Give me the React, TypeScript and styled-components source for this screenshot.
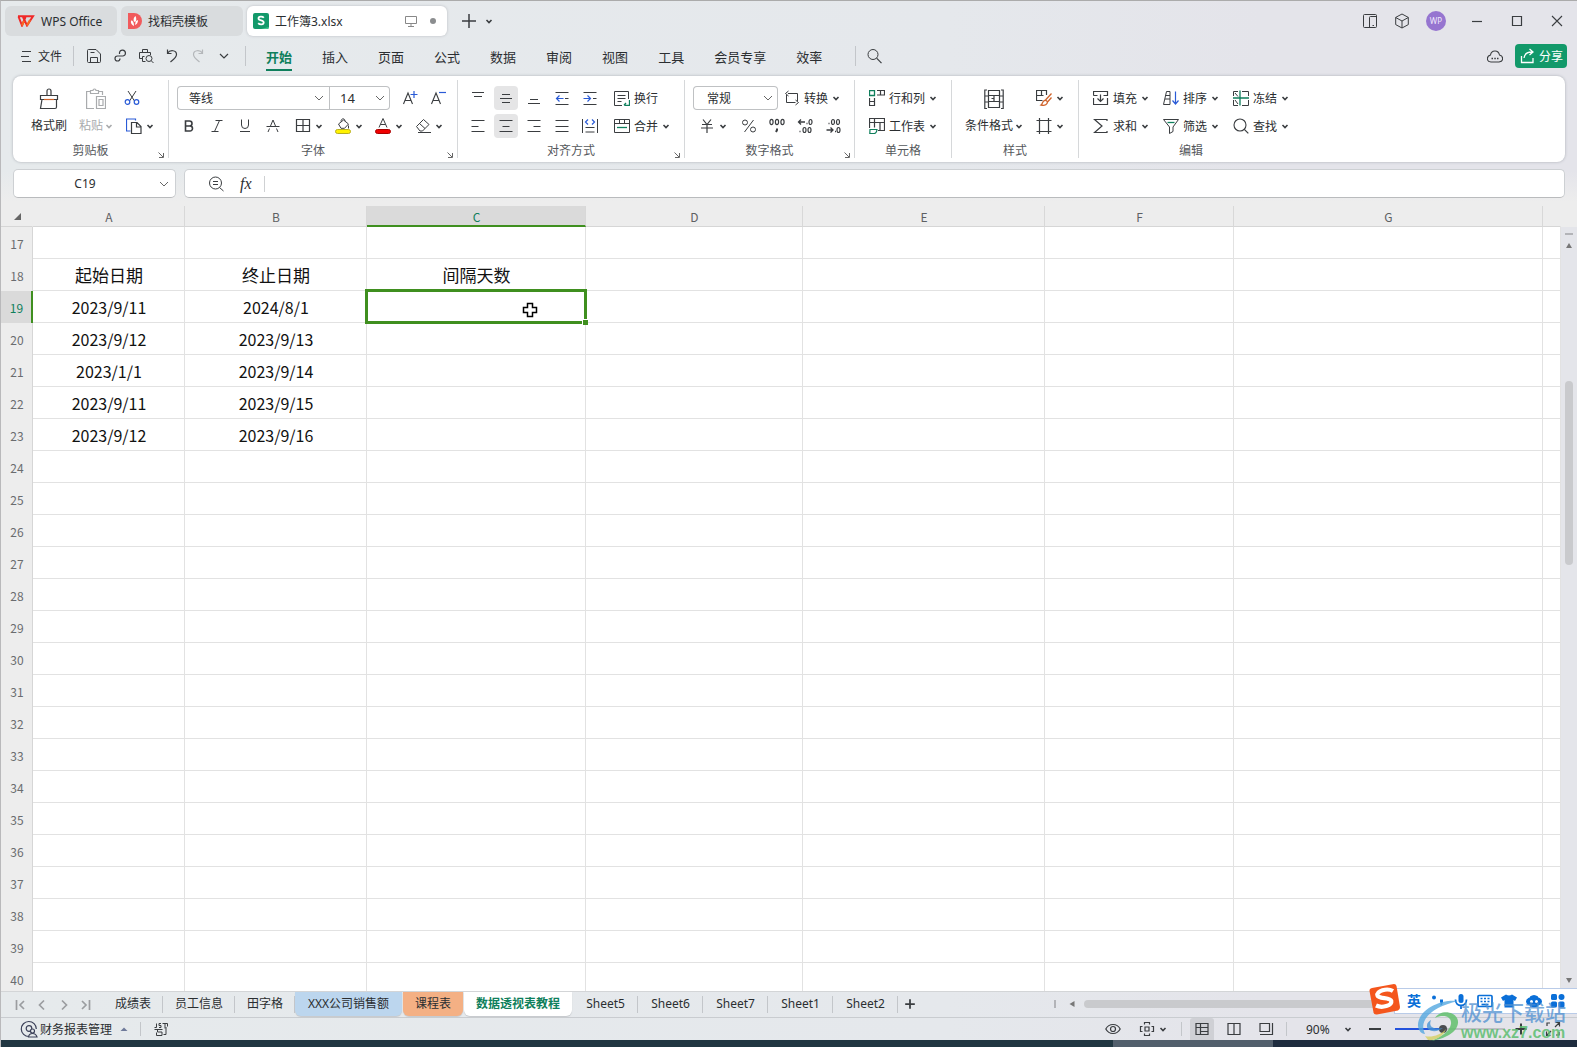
import React, { useState } from 'react';
import styled, { createGlobalStyle, css } from 'styled-components';

const ui = '"Noto Sans", "Noto Sans CJK SC", sans-serif';
const sheetFont = '"Noto Sans CJK SC", "Noto Sans", sans-serif';
const ink = '#2b2e31';
const green = '#0f7f5c';
const gridGreen = '#3f8f1f';
const blue = '#2a5bd7';

const Global = createGlobalStyle`
  *, *::before, *::after { box-sizing: border-box; }
  body { margin: 0; font-family: ${ui}; font-size: 12px; color: ${ink}; }
  button, input, select { font: inherit; color: inherit; margin: 0; padding: 0; border: 0; background: none; outline: none; }
  svg { display: block; flex: none; }
`;

/* ---------- icons ---------- */

type IconProps = { name: string; size?: number; color?: string };

const icons: Record<string, React.ReactNode> = {
  chevron: <path d="M5.5 7l2.5 2.5L10.500 7" strokeWidth="1.6" />,
  chevronWide: <path d="M4 6l4 4 4-4" stroke="#666" />,
  chevronMenu: <path d="M4 6l4 4 4-4" strokeWidth="1.2" />,
  menu: <path d="M4 3.500h9M3 8.500h8M4 13.500h9" />,
  save: <path d="M1.500 2.500q0-1 1-1h7.500l4.500 4.500v7.500q0 1-1 1h-11q-1 0-1-1zM4.500 14v-4.500h7v4.500M4.500 4.500h4" />,
  link: <path d="M7.500 6V4.500a3 3 0 1 1 3.500 3.500H5.500a2.500 2.500 0 1 0 2.500 2.500" strokeWidth="1.200" />,
  preview: <><path d="M4 10.500H1.500v-6h11V7M4.500 4.500v-3h5v3M4.500 8.500h2M4.500 8.500v5h3" /><circle cx="11" cy="10.500" r="3" /><path d="M13.200 12.700l2.300 2.300" /></>,
  undo: <path d="M3.500 1.500v4h4M3.500 5.200C6 1.500 12.500 2 12.500 6.500c0 3-3 5-6 7.500" strokeWidth="1.200" />,
  redo: <path d="M12.500 1.500v4h-4M12.500 5.200C10 1.500 3.500 2 3.500 6.500c0 3 3 5 6 7.500" strokeWidth="1.200" />,
  search: <><circle cx="7" cy="6.500" r="5" /><path d="M10.600 10.200l4.900 4.900" strokeWidth="1.200" /></>,
  plusThin: <path d="M8 1v14M1 8h14" strokeWidth="1.500" />,
  monitor: <path d="M2.500 3.500h11v7h-11zM8 10.500v2.500M5 13.500h6" stroke="#888" />,
  phone: <><rect x="1.500" y="1.500" width="13" height="13" rx="1" /><path d="M7.500 14.500v-10q0-1 1-1h6M10.500 12.500h1.500" /></>,
  cube: <path d="M8 1l6.300 3.400v7.200L8 15l-6.300-3.400V4.400zM1.700 4.500L8 8l6.300-3.500M8 8v7" />,
  minimize: <path d="M3 8.500h10" strokeWidth="1.200" />,
  maximize: <path d="M3.500 3.500h9v9h-9z" strokeWidth="1.200" />,
  close: <path d="M3 3l10 10M13 3L3 13" strokeWidth="1.100" />,
  cloud: <><path d="M4 14c-5-.5-4.500-6-.5-7 .8-5 7.800-5.500 9 0 4 .7 4.500 6.500-.5 7z" strokeWidth="1.100" /><path d="M4.500 10.500h1.500M7.300 10.500h1.500M10 10.500h1.500" strokeWidth="1.700" /></>,
  share: <path d="M2.500 8v6.500h11.500V10M5 10c.5-4 4-6 8-6M10.500 1l3.500 3-3.500 3" strokeWidth="1.300" />,
  cut: <><path d="M4 1l6.500 10M12 1L5.500 11" /><g stroke={blue} strokeWidth="1.200"><circle cx="3.500" cy="12" r="2.300" /><circle cx="12.500" cy="12" r="2.300" /></g></>,
  copy: <><path d="M9.500 2.500v-1.500h-9v12h4" stroke={blue} strokeWidth="1.200" /><path d="M5.500 4.500h5.500l4 4v7h-9.500zM10.500 4.500v4.500h4.500" strokeWidth="1.200" /></>,
  bold: <path d="M4.500 3h4a2.400 2.400 0 0 1 0 5h-4zM4.500 8h4.500a2.500 2.500 0 0 1 0 5H4.500z" strokeWidth="1.600" />,
  italic: <path d="M6.500 2.500h7M2.500 13.500h7M10.500 2.500l-5 11" />,
  underline: <path d="M4.500 1.500v5.500a3.500 3.500 0 0 0 7 0V1.500M3 13.500h10" />,
  strike: <path d="M1.500 8.500h13M5.500 8L8 2l2.500 6M4.500 10.500L3 14M11.500 10.500l1.500 3.500" />,
  borders: <path d="M1.500 1.500h13v12h-13zM8 1.500v12M1.500 7.500h13" strokeWidth="1.200" />,
  fill: <><path d="M3.500 6l5-4 5 4-4 4.300H6zM6 3.500C6 0 10 0 10 3M13.500 7.500v3" /><rect x=".5" y="11.500" width="15" height="4" rx="2" fill="#fff200" stroke="#b7ae20" /></>,
  fontColor: <><path d="M4 9.500L8 .5l4 9M5.500 6.500h5" /><rect x=".5" y="11.500" width="15" height="4" rx="2" fill="#f00000" stroke="#a80000" /></>,
  eraser: <path d="M1.500 8.500l7-7 5.500 5-6.500 6.500H5zM4.500 5.500l5.500 5M3 14.500h13" />,
  growFont: <><path d="M1.500 14L6 3l4.500 11M3 10.500h6" strokeWidth="1.100" /><path d="M12 1v7M8.500 4.500h7" stroke={blue} strokeWidth="1.200" /></>,
  shrinkFont: <><path d="M1.500 14L6 3l4.500 11M3 10.500h6" strokeWidth="1.100" /><path d="M9 2.500h7" stroke={blue} strokeWidth="1.200" /></>,
  top: <path d="M2 2.500h12M4 6.500h8" strokeWidth="1.100" />,
  middle: <path d="M4 4.500h8M2 8.500h12M4 12.500h8" strokeWidth="1.100" />,
  bottom: <path d="M4 9.500h8M2 13.500h12" strokeWidth="1.100" />,
  outdent: <><path d="M1.500 2.500h13M1.500 14.500h13M11 8.500h3.500" /><path d="M9.500 8.500h-7M5.500 5.500l-3 3 3 3" stroke={blue} strokeWidth="1.200" /></>,
  indent: <><path d="M1.500 2.500h13M1.500 14.500h13M11 8.500h3.500" /><path d="M1.500 8.500h7M5.500 5.500l3 3-3 3" stroke={blue} strokeWidth="1.200" /></>,
  left: <path d="M1.500 2.500h13M1.500 8.500h7M1.500 13.500h13" />,
  center: <path d="M1.500 2.500h13M4.500 8.500h7M1.500 13.500h13" />,
  right: <path d="M1.500 2.500h13M7.500 8.500h7M1.500 13.500h13" />,
  justify: <path d="M1.500 2.500h13M1.500 8.500h13M1.500 13.500h13" />,
  distribute: <><path d="M.5 1v14M15.500 1v14M3.500 9.500h9M3.500 14h9" /><path d="M6 1.500L3.500 4 6 6.500M10 1.500L12.500 4 10 6.500" stroke={blue} strokeWidth="1.200" /></>,
  wrap: <><path d="M8 15.500H.500V1.500h14V9M3.500 5.500h8M3.500 8.500h8M3.500 11.500h4" /><path d="M15.500 10v5.500h-5M12 13l-2 2.300" stroke={green} strokeWidth="1.300" /></>,
  merge: <><path d="M.5 1.500h15v13H.500zM.500 5.500h15M5.500 1.500v4M10.500 1.500v4" /><path d="M3 9.500h10" stroke={green} strokeWidth="1.300" /></>,
  convert: <path d="M4 3.500h9.500V11M11.500 12.500H2.500V5M4.500 1l-3 2.500 3 2.500M11.500 10l3 2.500-3 2.500" />,
  yuan: <path d="M4 1.500l4 5 4-5M3 6.500h10M2 10h12M8 6.500V15" strokeWidth="1.200" />,
  percent: <><circle cx="4" cy="4.500" r="2.500" /><circle cx="12" cy="11.500" r="2.500" /><path d="M12.500 2l-9 12" /></>,
  comma: <><g strokeWidth="1.200"><ellipse cx="2.500" cy="4" rx="1.600" ry="2.700" /><ellipse cx="8" cy="4" rx="1.600" ry="2.700" /><ellipse cx="13.500" cy="4" rx="1.600" ry="2.700" /></g><path d="M8 10.500v1.500l-1 2" strokeWidth="2" /></>,
  decUp: <><path d="M8 4H1.500M4 1.500L1.500 4 4 6.500M9.500 5.500h1M2.500 13.500h1" strokeWidth="1.300" /><g strokeWidth="1.200"><ellipse cx="13.500" cy="4" rx="1.500" ry="2.500" /><ellipse cx="7.500" cy="12" rx="1.500" ry="2.500" /><ellipse cx="12.500" cy="12" rx="1.500" ry="2.500" /></g></>,
  decDown: <><path d="M1.500 12H8M5.500 9.500L8 12l-2.500 2.500M3.500 5.500h1M10 13.500h1" strokeWidth="1.300" /><g strokeWidth="1.200"><ellipse cx="8" cy="4" rx="1.500" ry="2.500" /><ellipse cx="13" cy="4" rx="1.500" ry="2.500" /><ellipse cx="13.500" cy="12" rx="1.500" ry="2.500" /></g></>,
  rowsCols: <><path d="M.5.5h5v5h-5z" stroke={green} strokeWidth="1.300" /><path d="M8 .5h7.500v4.500H8M11.500.500v4.500M.500 8v7.500h5V8M.500 11.500h5" strokeWidth="1.200" /></>,
  worksheet: <><path d="M.5 10V.500h15v12H9M.500 4.500h15M5.500.500v9M11 4.500v8" strokeWidth="1.200" /><path d="M1 11.500h7q-.5 4-3 4H.800z" stroke={green} strokeWidth="1.200" /></>,
  formatCell: <><path d="M6.500 10.500H.500V.500h10V5M.500 5.500h7M5.500.500v5.500" strokeWidth="1.200" /><path d="M15.500 3.500L9.500 10M15.500 7.500l-4 4.500M8.500 10.500c2-.5 3.500 1 2.500 3-1 2-4 2-6 1.500 1.500-1 1.500-4 3.500-4.500z" stroke="#d0642c" strokeWidth="1.300" /></>,
  frame: <path d="M3.500 0v16M12.500 0v16M.500 2.500h15M.500 13.500h15" strokeWidth="1.200" />,
  fillDown: <path d="M.5 5.500v-4h14v4h-4M.500 5.500h4M.500 8v6.500h14V8M7.500 4.500v7M4.500 8.500l3 3 3-3" strokeWidth="1.200" />,
  sort: <><path d="M.5 14.500L3.500 1.500h3.500v13zM2 9h5M2.500 5.500h4.500" /><path d="M12.500 1.500v12.500M9.500 10.500l3 3.500 3-3.500" stroke={blue} strokeWidth="1.200" /></>,
  freeze: <><path d="M5 1.500H.500V6M.500 10v5.500H5M9 1.500h6.500V6M9 15.500h6.500V10M2 3l3 3.500M2 10l3 4" /><path d="M0 8h16M7 .500v15" stroke={green} strokeWidth="1.300" /></>,
  sum: <path d="M14 3V1.500H1.500L9 8l-7.500 6.500H14V13" strokeWidth="1.200" />,
  filter: <><path d="M.5 1.500h15L10 9v4.500L6.500 15.500V9z" /><path d="M4.500 4.500h7" stroke={green} strokeWidth="1.300" /></>,
  find: <><circle cx="7" cy="7" r="6" strokeWidth="1.100" /><path d="M11.300 11.300l4 4" strokeWidth="1.200" /></>,
  zoomOut: <><circle cx="7.500" cy="7" r="6" /><path d="M5 5.500h5M5 8.500h5M11.500 11.500l4 3.500" /></>,
  launcher: <path d="M6.500 10.500L11 15M11.500 11v4.500H7" stroke="#666" />,
  eye: <><path d="M.800 8C4 2 12 2 15.200 8 12 14 4 14 .800 8z" strokeWidth="1.200" /><circle cx="8" cy="8" r="2.500" strokeWidth="1.200" /></>,
  focus: <path d="M6 6h4v4H6zM5.500 3.500v-2h5v2M5.500 12.500v2h5v-2M3.500 5.500h-2v5h2M12.500 5.500h2v5h-2" strokeWidth="1.200" />,
  normalView: <path d="M2 2.500h12v11H2zM2 6.500h12M6.500 2.500v11M6.500 10.500h7.500" strokeWidth="1.200" />,
  pageView: <path d="M2 2.500h12v11H2zM8 2.500v11" strokeWidth="1.200" />,
  breakView: <path d="M2 2.500h9.500v8H2zM14.500 2v11.500H2" strokeWidth="1.200" />,
  minus: <path d="M2 8h12" strokeWidth="2" />,
  plus: <path d="M2.500 8h11M8 2.500v11" strokeWidth="2" />,
  expand: <path d="M10 6l4-4M10.500 1.500h4v4M6 10l-4 4M1.500 10.500v4h4M5 2H2v3M11 14h3v-3" strokeWidth="1.200" />,
  first: <path d="M4.500 3v10M12 4L8 8l4 4" strokeWidth="1.700" />,
  prev: <path d="M10 3.500L5.500 8l4.500 4.500" strokeWidth="1.700" />,
  next: <path d="M6 3.500L10.500 8 6 12.500" strokeWidth="1.700" />,
  last: <path d="M11.500 3v10M4 4l4 4-4 4" strokeWidth="1.700" />,
  up: <path d="M8 5l3 5H5z" fill="#777" stroke="none" />,
  down: <path d="M8 11l3-5H5z" fill="#777" stroke="none" />,
  backward: <path d="M5.500 8l5-3v6z" fill="#777" stroke="none" />,
  script: <path d="M3.500 2.500v4h-2M8 2.500H6v2h2v2H6M9.500 2.500h5v3M12 2.500v5M1.500 8.500H9.500M4.500 8.500v2.500h4.500v3.500H3.500v-3M10.500 13.500h2.500V6" />,
};

const Svg = styled.svg.attrs({ viewBox: '0 0 16 16', 'aria-hidden': true })`
  fill: none;
`;
const Icon = ({ name, size = 16, color = '#3a3d40' }: IconProps) => (
  <Svg width={size} height={size} stroke={color}>{icons[name]}</Svg>
);

const ChevronBox = styled.span`
  width: 8px;
  display: flex;
  justify-content: center;
`;
const Chevron = ({ color }: { color?: string }) => <ChevronBox><Icon name="chevron" color={color} /></ChevronBox>;

/* ---------- window ---------- */

const Window = styled.div`
  height: 100vh;
  min-height: 480px;
  display: flex;
  flex-direction: column;
  overflow: hidden;
  position: relative;
  border-top: 1px solid #ababab;
  border-left: 1px solid #b9b9bb;
  background: linear-gradient(90deg, #e6eaec 0%, #e5e8ec 60%, #e4e4ea 80%);
`;

const TitleBar = styled.header`
  display: flex;
  align-items: center;
  height: 40px;
  padding: 0 8px 0 4px;
  gap: 4px;
  flex: none;
`;
const DocTab = styled.button<{ $width: number; $active?: boolean }>`
  width: ${p => p.$width}px;
  height: 30px;
  padding: 0 12px;
  display: flex;
  align-items: center;
  gap: 6px;
  border-radius: 6px;
  white-space: nowrap;
  background: ${p => (p.$active ? '#fff' : '#d9dcde')};
  ${p => p.$active && css`box-shadow: 0 0 3px #b9bcc0; padding: 0 8px 0 6px;`}
`;
const TabTools = styled.div`
  display: flex;
  gap: 4px;
  padding-left: 6px;
`;
const Spacer = styled.span`flex: 1;`;
const Dot = styled.span`
  width: 6px;
  height: 6px;
  margin: 0 3px 0 5px;
  border-radius: 50%;
  background: #8b8d8f;
`;
const PlainButton = styled.button<{ $w?: number }>`
  width: ${p => p.$w ?? 24}px;
  height: 24px;
  display: flex;
  align-items: center;
  justify-content: center;
`;
const WindowTools = styled.div`
  margin-left: auto;
  display: flex;
  align-items: center;
  gap: 8px;
`;
const WindowButtons = styled.div`
  display: flex;
  gap: 16px;
  padding-left: 7px;
`;
const Avatar = styled.span`
  width: 20px;
  height: 20px;
  border-radius: 50%;
  background: #9675d0;
  color: #efe8fb;
  font-size: 8px;
  line-height: 20px;
  text-align: center;
`;

const MenuBar = styled.nav`
  display: flex;
  align-items: center;
  height: 30px;
  padding: 0 10px 0 17px;
  flex: none;
`;
const FileButton = styled.button`
  display: flex;
  align-items: center;
  gap: 4px;
`;
const Divider = styled.span<{ $before?: number; $after?: number }>`
  width: 1px;
  height: 20px;
  margin: 0 ${p => p.$after ?? 0}px 0 ${p => p.$before ?? 0}px;
  background: #c3c6ca;
`;
const QuickTools = styled.div`
  display: flex;
  gap: 2px;
`;
const MenuItem = styled.button<{ $active?: boolean }>`
  height: 28px;
  margin: 2px 15px 0;
  font-size: 13px;
  white-space: nowrap;
  border-bottom: 2px solid ${p => (p.$active ? green : 'transparent')};
  color: ${p => (p.$active ? green : ink)};
  font-weight: ${p => (p.$active ? 700 : 400)};
`;
const ShareButton = styled.button`
  width: 52px;
  height: 24px;
  margin-left: 8px;
  border-radius: 4px;
  background: #12996a;
  color: #fff;
  display: flex;
  align-items: center;
  justify-content: center;
  gap: 4px;
`;

/* ---------- ribbon ---------- */

const Ribbon = styled.section`
  display: flex;
  margin: 5px 12px 0;
  padding: 4px 0;
  height: 86px;
  flex: none;
  border-radius: 8px;
  background: #fff;
  box-shadow: 0 0 3px #a9adb3;
`;
const GroupBox = styled.div<{ $w: number; $pad: number; $last?: boolean }>`
  width: ${p => p.$w}px;
  flex: none;
  padding-top: 6px;
  border-right: 1px solid ${p => (p.$last ? 'transparent' : '#d6d8da')};
  display: grid;
  grid-template-rows: 52px 1fr;
  & > :first-child { padding-left: ${p => p.$pad}px; }
`;
const GroupBody = styled.div<{ $gap?: number }>`
  display: flex;
  align-items: center;
  gap: ${p => p.$gap ?? 4}px;
`;
const GroupLabel = styled.div`
  display: grid;
  grid-template-columns: 16px 1fr 16px;
  align-items: end;
  text-align: center;
  line-height: 14px;
  color: #55585c;
`;
const Lines = styled.div`
  display: flex;
  flex-direction: column;
  gap: 4px;
`;
const Line = styled.div<{ $gap?: number }>`
  display: flex;
  align-items: center;
  height: 24px;
  gap: ${p => p.$gap ?? 4}px;
`;
const ToolButton = styled.button<{ $on?: boolean }>`
  width: 24px;
  height: 24px;
  display: flex;
  align-items: center;
  justify-content: center;
  border-radius: 4px;
  background: ${p => (p.$on ? '#e5e5e6' : 'transparent')};
`;
const SplitButton = styled.button`
  width: 36px;
  height: 24px;
  padding-left: 6px;
  display: flex;
  align-items: center;
  gap: 4px;
`;
const TextButton = styled.button`
  height: 24px;
  padding: 0 4px;
  display: flex;
  align-items: center;
  gap: 4px;
  white-space: nowrap;
`;
const BigButton = styled.button<{ $muted?: boolean }>`
  height: 52px;
  display: flex;
  flex-direction: column;
  align-items: center;
  justify-content: space-between;
  padding: 2px 0 3px;
  white-space: nowrap;
  color: ${p => (p.$muted ? '#a9abad' : ink)};
  & > span { display: flex; align-items: center; gap: 2px; line-height: 18px; }
`;
const SelectWrap = styled.span<{ $w: number }>`
  position: relative;
  width: ${p => p.$w}px;
  height: 24px;
  display: flex;
  align-items: center;
  & > svg { position: absolute; right: 2px; pointer-events: none; }
`;
const Select = styled.select<{ $size?: number; $pad?: number }>`
  appearance: none;
  width: 100%;
  height: 100%;
  padding-left: ${p => p.$pad ?? 12}px;
  font-size: ${p => p.$size ?? 12}px;
`;
const Field = styled.div`
  display: flex;
  height: 24px;
  border-radius: 4px;
  box-shadow: inset 0 0 0 1px #bfc1c3;
  & > span + span { border-left: 1px solid #bfc1c3; }
`;

type SelectBoxProps = { label: string; w: number; options: string[]; size?: number; pad?: number };
const SelectBox = ({ label, w, options, size, pad }: SelectBoxProps) => (
  <SelectWrap $w={w}>
    <Select aria-label={label} $size={size} $pad={pad}>{options.map(o => <option key={o}>{o}</option>)}</Select>
    <Icon name="chevronWide" />
  </SelectWrap>
);
const Tool = ({ name, label, on }: { name: string; label: string; on?: boolean }) => (
  <ToolButton $on={on} aria-label={label}><Icon name={name} /></ToolButton>
);
const Split = ({ name, label }: { name: string; label: string }) => (
  <SplitButton aria-label={label}><Icon name={name} /><Chevron /></SplitButton>
);
const Text = ({ name, children, plain }: { name: string; children: string; plain?: boolean }) => (
  <TextButton><Icon name={name} />{children}{!plain && <Chevron />}</TextButton>
);

type GroupProps = { title: string; w: number; pad: number; gap?: number; launch?: boolean; last?: boolean; children: React.ReactNode };
const Group = ({ title, w, pad, gap, launch, last, children }: GroupProps) => (
  <GroupBox $w={w} $pad={pad} $last={last}>
    <GroupBody $gap={gap}>{children}</GroupBody>
    <GroupLabel>
      <span />
      <span>{title}</span>
      {launch && <button aria-label={title + '设置'}><Icon name="launcher" /></button>}
    </GroupLabel>
  </GroupBox>
);

/* ---------- formula bar ---------- */

const FormulaRow = styled.div`
  display: flex;
  gap: 8px;
  height: 44px;
  padding: 7px 12px 8px;
  flex: none;
  background: linear-gradient(180deg, rgba(237, 237, 237, 0) 20%, #ededed 90%);
`;
const FormulaBox = styled.div<{ $w?: number }>`
  display: flex;
  align-items: center;
  border: 1px solid #cdd0d3;
  border-bottom-color: #b9bbbd;
  border-radius: 5px;
  background: #fff;
  ${p => (p.$w ? css`width: ${p.$w}px; padding-right: 3px;` : css`flex: 1; padding-left: 23px;`)}
`;
const NameInput = styled.input`
  width: 100%;
  min-width: 0;
  text-align: center;
`;
const FormulaInput = styled.input`
  flex: 1;
  padding: 0 8px;
`;
const Fx = styled.span`
  width: 24px;
  margin-left: 16px;
  font: italic 16px/20px "Liberation Serif", serif;
`;
const FormulaDivider = styled(Divider)`
  height: 16px;
  background: #cfd1d3;
`;

/* ---------- sheet ---------- */

const SheetArea = styled.main`
  flex: 1;
  min-height: 0;
  display: flex;
  overflow: hidden;
  background: #ededed;
`;
const Table = styled.table`
  flex: 1;
  align-self: flex-start;
  min-width: 0;
  table-layout: fixed;
  border-collapse: separate;
  border-spacing: 0;
  font-family: ${sheetFont};
`;
const ColHead = styled.th<{ $on?: boolean; $edge?: boolean }>`
  height: 21px;
  padding: 2px 0 0 1px;
  font-size: 12px;
  line-height: 16px;
  font-weight: 400;
  color: ${p => (p.$on ? green : '#5e6063')};
  background: ${p => (p.$on ? '#dadada' : '#ededed')};
  border-right: 1px solid ${p => (p.$edge ? '#ededed' : '#d8d8d8')};
  border-bottom: ${p => (p.$on ? `2px solid ${gridGreen}` : '1px solid #d6d6d6')};
`;
const RowHead = styled.th<{ $on?: boolean }>`
  height: 32px;
  padding: 1px 0 0 1px;
  font-size: 12px;
  font-weight: 400;
  color: ${p => (p.$on ? green : '#6a6c6f')};
  background: ${p => (p.$on ? '#dadada' : '#ededed')};
  border-right: ${p => (p.$on ? `2px solid ${gridGreen}` : '1px solid #d6d6d6')};
`;
const Cell = styled.td`
  position: relative;
  height: 32px;
  padding: 0 0 0 1px;
  text-align: center;
  line-height: 20px;
  font-size: 16px;
  color: #111;
  background: #fff;
  border-right: 1px solid #e2e2e2;
  border-bottom: 1px solid #e2e2e2;
`;
const HeadCell = styled(Cell)`font-size: 17px;`;
const Corner = styled.svg`margin-left: 12px;`;
const Selection = styled.span`
  position: absolute;
  z-index: 2;
  inset: -2px;
  border: 3px solid ${gridGreen};
  &::after {
    content: '';
    position: absolute;
    right: -4px;
    bottom: -4px;
    width: 6px;
    height: 6px;
    background: ${gridGreen};
    border: 1px solid #fff;
    border-width: 1px 0 0 1px;
  }
`;
const Cursor = styled.svg`
  position: absolute;
  z-index: 3;
  left: 154px;
  top: 10px;
`;
const VScroll = styled.div`
  width: 16px;
  flex: none;
  margin-top: 21px;
  padding-bottom: 3px;
  display: flex;
  flex-direction: column;
  align-items: center;
  background: #e4e5ea;
`;
const VGrip = styled.span`
  width: 8px;
  height: 2px;
  margin: 6px 0 3px;
  background: #b3b4b8;
`;
const VTrack = styled.div`
  flex: 1;
  width: 8px;
  padding-top: 127px;
`;
const VThumb = styled.div`
  height: 184px;
  border-radius: 4px;
  background: #c9cacd;
`;

/* ---------- sheet tabs and status ---------- */

const TabBar = styled.div`
  display: flex;
  height: 27px;
  flex: none;
  border-top: 1px solid #d3d5d7;
  border-bottom: 1px solid #c9ccd0;
`;
const TabNav = styled.div`
  display: flex;
  align-items: center;
  padding: 0 6px 0 8px;
  & > button { width: 22px; height: 24px; display: flex; align-items: center; justify-content: center; }
`;
const SheetTab = styled.button<{ $tone?: string; $active?: boolean; $minWidth?: number }>`
  height: 24px;
  padding: 0 12px 2px;
  min-width: ${p => p.$minWidth ?? 0}px;
  white-space: nowrap;
  ${p => (p.$tone ? css`
    margin-right: 1px;
    background: ${p.$tone};
    border-radius: 0 0 6px 6px;
    box-shadow: 0 1px 1px #c5c8cc;
  ` : css`
    background: linear-gradient(#c3c6ca, #c3c6ca) right 4px / 1px 17px no-repeat;
  `)}
  ${p => p.$active && css`color: ${green}; font-weight: 700;`}
`;
const HScroll = styled.div`
  margin-left: auto;
  width: 523px;
  padding-bottom: 2px;
  display: flex;
  align-items: center;
  gap: 8px;
`;
const HGrip = styled.span`
  width: 2px;
  height: 8px;
  background: #b3b4b8;
`;
const HThumb = styled.div`
  flex: 1;
  height: 8px;
  margin: 0 120px 0 -4px;
  border-radius: 4px;
  background: #c9cacd;
`;

const StatusBar = styled.footer`
  display: flex;
  align-items: center;
  height: 22px;
  padding: 0 0 0 19px;
  flex: none;
  white-space: nowrap;
`;
const BookButton = styled.button`
  display: flex;
  align-items: center;
  gap: 2px;
`;
const StatusDivider = styled(Divider)`height: 14px;`;
const StatusRight = styled.div`
  margin-left: auto;
  display: flex;
  align-items: center;
`;
const Views = styled.div`
  display: flex;
  align-items: center;
  gap: 8px;
`;
const ViewButton = styled.button<{ $on?: boolean }>`
  width: 24px;
  height: 22px;
  display: flex;
  align-items: center;
  justify-content: center;
  border-radius: 3px 3px 0 0;
  background: ${p => (p.$on ? '#cfd0d5' : 'transparent')};
`;
const ZoomSelect = styled(SelectWrap)`
  margin-right: 15px;
  & > svg { right: -4px; }
`;
const Slider = styled.input`
  appearance: none;
  width: 110px;
  height: 16px;
  margin: 0 8px 0 12px;
  &::-webkit-slider-runnable-track {
    height: 2px;
    background: linear-gradient(90deg, #2452dc 44%, #bcbec4 44%);
  }
  &::-webkit-slider-thumb {
    appearance: none;
    width: 8px;
    height: 8px;
    margin-top: -3px;
    border-radius: 50%;
    background: #4a4c50;
  }
`;
const Taskbar = styled.div`
  height: 7px;
  flex: none;
  margin-left: -1px;
  background: linear-gradient(90deg, #203641 0 1113px, #525f6c 1113px 1273px, #1e2c3e 1273px);
`;

/* ---------- floating input-method bar and watermark ---------- */

const ImeBar = styled.aside`
  position: absolute;
  right: 0;
  bottom: 33px;
  height: 26px;
  width: 183px;
  padding-left: 12px;
  display: flex;
  align-items: center;
  gap: 8px;
  background: #fff;
  border: 1px solid #b9cbe8;
  border-right: 0;
  color: #0a6fd8;
`;
const ImeLogo = styled.svg`
  position: absolute;
  left: -27px;
  top: -6px;
`;
const ImeMode = styled.strong`
  font-size: 14px;
  line-height: 20px;
`;
const Watermark = styled.div`
  position: absolute;
  right: 11px;
  bottom: 5px;
  display: flex;
  gap: 2px;
  align-items: center;
  pointer-events: none;
`;
const MarkText = styled.div`
  width: 105px;
  white-space: nowrap;
  & > b { display: block; font-size: 21px; line-height: 24px; font-weight: 500; color: rgba(78, 143, 208, 0.75); }
  & > i { display: block; font: normal 700 16px/18px "Liberation Sans", sans-serif; color: rgba(92, 190, 112, 0.85); }
`;

const columns = [
  { id: 'A', w: 152 }, { id: 'B', w: 182 }, { id: 'C', w: 219 }, { id: 'D', w: 217 },
  { id: 'E', w: 242 }, { id: 'F', w: 189 }, { id: 'G', w: 309 },
];
const values: Record<string, string> = {
  A18: '起始日期', B18: '终止日期', C18: '间隔天数',
  A19: '2023/9/11', B19: '2024/8/1',
  A20: '2023/9/12', B20: '2023/9/13',
  A21: '2023/1/1', B21: '2023/9/14',
  A22: '2023/9/11', B22: '2023/9/15',
  A23: '2023/9/12', B23: '2023/9/16',
};
const rows = Array.from({ length: 24 }, (_, i) => i + 17);
const menus = ['开始', '插入', '页面', '公式', '数据', '审阅', '视图', '工具', '会员专享', '效率'];
const sheets: { name: string; tone?: string; active?: boolean; minWidth?: number }[] = [
  { name: '成绩表', minWidth: 60 }, { name: '员工信息' }, { name: '田字格', minWidth: 60 },
  { name: 'XXX公司销售额', tone: '#bcd6ee', minWidth: 107 }, { name: '课程表', tone: '#f4b084' },
  { name: '数据透视表教程', tone: '#ffffff', active: true },
  { name: 'Sheet5', minWidth: 65 }, { name: 'Sheet6', minWidth: 65 }, { name: 'Sheet7', minWidth: 65 },
  { name: 'Sheet1', minWidth: 65 }, { name: 'Sheet2', minWidth: 65 },
];

export default function App() {
  const [zoom, setZoom] = useState(43);
  const [formula, setFormula] = useState('');
  const [cellName, setCellName] = useState('C19');

  return (
    <Window>
      <Global />
      <TitleBar>
        <DocTab $width={112}>
          <svg width="18" height="12" viewBox="0 0 18 12" fill="none">
            <path d="M1 1.200h9M1.500 1.500L5 10.500 8.500 2M6 2l4 8.500L16 1.200H8.500" stroke="#f02828" strokeWidth="2" />
            <path d="M5 10.500L7 6M10 10.500L13 5" stroke="#f86a20" strokeWidth="2" />
          </svg>
          WPS Office
        </DocTab>
        <DocTab $width={122}>
          <svg width="14" height="16" viewBox="0 0 14 16" style={{ marginLeft: -5 }}>
            <path d="M0 0h6a8 8 0 0 1 0 16H0z" fill="#f15a5c" />
            <path d="M3 7.500c2 0 3 2 3 5.500-2.500-1-3.500-3-3-5.500zM6 9c-1-3 0-5 1.500-6 1 2 1 4 .2 5.500L7 12c2-.5 3-2.500 3-5" fill="#fff" />
          </svg>
          找稻壳模板
        </DocTab>
        <DocTab $width={200} $active>
          <svg width="16" height="16" viewBox="0 0 16 16">
            <rect width="16" height="16" rx="2" fill="#12996a" />
            <path d="M8 16l8-2v0q0 2-2 2z" fill="#3fc58e" />
            <path d="M10.800 4.800C9.500 3.200 5.500 3.300 5.500 5.500c0 2.600 5.200 1.300 5.200 4 0 2.300-4 2.300-5.500.6" fill="none" stroke="#fff" strokeWidth="1.800" />
          </svg>
          工作簿3.xlsx
          <Spacer />
          <Icon name="monitor" />
          <Dot />
        </DocTab>
        <TabTools>
          <PlainButton aria-label="新建"><Icon name="plusThin" /></PlainButton>
          <PlainButton $w={8} aria-label="更多标签"><Chevron /></PlainButton>
        </TabTools>
        <WindowTools>
          <PlainButton aria-label="移动端"><Icon name="phone" /></PlainButton>
          <PlainButton aria-label="应用"><Icon name="cube" /></PlainButton>
          <PlainButton $w={28} aria-label="账户"><Avatar>WP</Avatar></PlainButton>
          <WindowButtons>
            <PlainButton aria-label="最小化"><Icon name="minimize" /></PlainButton>
            <PlainButton aria-label="最大化"><Icon name="maximize" /></PlainButton>
            <PlainButton aria-label="关闭"><Icon name="close" /></PlainButton>
          </WindowButtons>
        </WindowTools>
      </TitleBar>

      <MenuBar>
        <FileButton><Icon name="menu" />文件</FileButton>
        <Divider $before={11} $after={8} />
        <QuickTools>
          {['save', 'link', 'preview', 'undo'].map(n => <PlainButton key={n} aria-label={n}><Icon name={n} /></PlainButton>)}
          <PlainButton aria-label="redo"><Icon name="redo" color="#b4b7ba" /></PlainButton>
          <PlainButton aria-label="more"><Icon name="chevronMenu" /></PlainButton>
        </QuickTools>
        <Divider $before={9} $after={5} />
        {menus.map((m, i) => <MenuItem key={m} $active={i === 0}>{m}</MenuItem>)}
        <Divider $before={18} $after={6} />
        <PlainButton aria-label="搜索"><Icon name="search" /></PlainButton>
        <Spacer />
        <PlainButton aria-label="云同步"><Icon name="cloud" /></PlainButton>
        <ShareButton><Icon name="share" color="#fff" />分享</ShareButton>
      </MenuBar>

      <Ribbon>
        <Group title="剪贴板" w={156} pad={18} gap={7} launch>
          <GroupBody $gap={12}>
            <BigButton>
              <svg width="20" height="22" viewBox="0 0 20 22" fill="none" stroke="#3a3d40" strokeWidth="1.200">
                <path d="M8 7.500V3a2 2 0 0 1 4 0v4.500M1.500 7.500h17v4h-17zM3 11.500L1.500 20.500h14.500q1.500 0 1.500-1.500v-7.500" />
                <path d="M5 11.500h10" stroke="#d0642c" />
              </svg>
              <span>格式刷</span>
            </BigButton>
            <BigButton $muted>
              <svg width="20" height="22" viewBox="0 0 20 22" fill="none" stroke="#a9abad" strokeWidth="1.200">
                <path d="M8 20.500H.600V3.500H4M12 3.500h4.500V7M4.500 5.500v-3h2.500q0-1.500 1.500-1.500t1.500 1.500h2.500v3zM10.500 8.500h9v12h-9zM13 11.500h4v6h-4z" />
              </svg>
              <span>粘贴<Chevron color="#a9abad" /></span>
            </BigButton>
          </GroupBody>
          <Lines>
            <Line><Tool name="cut" label="剪切" /></Line>
            <Line><Split name="copy" label="复制" /></Line>
          </Lines>
        </Group>

        <Group title="字体" w={289} pad={8} launch>
          <Lines>
            <Line $gap={8}>
              <Field>
                <SelectBox label="字体" w={152} options={['等线']} />
                <SelectBox label="字号" w={61} options={['14']} size={13} pad={10} />
              </Field>
              <Line>
                <Tool name="growFont" label="增大字号" />
                <Tool name="shrinkFont" label="减小字号" />
              </Line>
            </Line>
            <Line>
              <Tool name="bold" label="加粗" />
              <Tool name="italic" label="倾斜" />
              <Tool name="underline" label="下划线" />
              <Tool name="strike" label="删除线" />
              <Split name="borders" label="边框" />
              <Split name="fill" label="填充颜色" />
              <Split name="fontColor" label="字体颜色" />
              <Split name="eraser" label="清除" />
            </Line>
          </Lines>
        </Group>

        <Group title="对齐方式" w={227} pad={8} gap={8} launch>
          <Lines>
            <Line>
              <Tool name="top" label="顶端对齐" />
              <Tool name="middle" label="垂直居中" on />
              <Tool name="bottom" label="底端对齐" />
              <Tool name="outdent" label="减少缩进" />
              <Tool name="indent" label="增加缩进" />
            </Line>
            <Line>
              <Tool name="left" label="左对齐" />
              <Tool name="center" label="水平居中" on />
              <Tool name="right" label="右对齐" />
              <Tool name="justify" label="两端对齐" />
              <Tool name="distribute" label="分散对齐" />
            </Line>
          </Lines>
          <Lines>
            <Line><Text name="wrap" plain>换行</Text></Line>
            <Line><Text name="merge">合并</Text></Line>
          </Lines>
        </Group>

        <Group title="数字格式" w={170} pad={8} launch>
          <Lines>
            <Line $gap={2}>
              <Field><SelectBox label="数字格式" w={85} options={['常规']} pad={14} /></Field>
              <Text name="convert">转换</Text>
            </Line>
            <Line $gap={8}>
              <Split name="yuan" label="货币" />
              <Line>
                <Tool name="percent" label="百分比" />
                <Tool name="comma" label="千位分隔" />
                <Tool name="decUp" label="增加小数位" />
                <Tool name="decDown" label="减少小数位" />
              </Line>
            </Line>
          </Lines>
        </Group>

        <Group title="单元格" w={97} pad={10}>
          <Lines>
            <Line><Text name="rowsCols">行和列</Text></Line>
            <Line><Text name="worksheet">工作表</Text></Line>
          </Lines>
        </Group>

        <Group title="样式" w={127} pad={13} gap={7}>
          <BigButton>
            <svg width="20" height="22" viewBox="0 0 20 22" fill="none" stroke="#3a3d40" strokeWidth="1.200">
              <path d="M3 2H.800v18.500H3M17 2h2.200v18.500H17M.800 8h3.700M.800 14h3.700M15.500 8h3.700M15.500 14h3.700M4.500 2.500h11v5h-11zM4.500 7.500v6h11v-6M4.500 13.500v6h11v-6M10 7.500v3H7.500M10 13.500v-3" />
            </svg>
            <span>条件格式<Chevron /></span>
          </BigButton>
          <Lines>
            <Line><Split name="formatCell" label="单元格样式" /></Line>
            <Line><Split name="frame" label="表格样式" /></Line>
          </Lines>
        </Group>

        <Group title="编辑" w={225} pad={10} gap={6} last>
          <Lines>
            <Line><Text name="fillDown">填充</Text></Line>
            <Line><Text name="sum">求和</Text></Line>
          </Lines>
          <Lines>
            <Line><Text name="sort">排序</Text></Line>
            <Line><Text name="filter">筛选</Text></Line>
          </Lines>
          <Lines>
            <Line><Text name="freeze">冻结</Text></Line>
            <Line><Text name="find">查找</Text></Line>
          </Lines>
        </Group>
      </Ribbon>

      <FormulaRow>
        <FormulaBox $w={163}>
          <NameInput aria-label="名称框" value={cellName} onChange={e => setCellName(e.target.value)} />
          <Icon name="chevronWide" />
        </FormulaBox>
        <FormulaBox>
          <Icon name="zoomOut" />
          <Fx>fx</Fx>
          <FormulaDivider />
          <FormulaInput aria-label="编辑栏" value={formula} onChange={e => setFormula(e.target.value)} />
        </FormulaBox>
      </FormulaRow>

      <SheetArea>
        <Table>
          <colgroup>
            <col style={{ width: 32 }} />
            {columns.map(c => <col key={c.id} style={{ width: c.w }} />)}
            <col />
          </colgroup>
          <thead>
            <tr>
              <ColHead $edge aria-label="全选">
                <Corner width="8" height="8" viewBox="0 0 8 8"><path d="M7 0v7H0z" fill="#666" /></Corner>
              </ColHead>
              {columns.map(c => <ColHead key={c.id} scope="col" $on={c.id === 'C'}>{c.id}</ColHead>)}
              <ColHead $edge />
            </tr>
          </thead>
          <tbody>
            {rows.map(r => (
              <tr key={r}>
                <RowHead scope="row" $on={r === 19}>{r}</RowHead>
                {columns.map(c => {
                  const key = c.id + r;
                  const Td = r === 18 ? HeadCell : Cell;
                  return (
                    <Td key={key}>
                      {values[key]}
                      {key === 'C19' && (
                        <>
                          <Selection />
                          <Cursor width="18" height="18" viewBox="0 0 18 18">
                            <path d="M6.500 2.500h5v4h4v5h-4v4h-5v-4h-4v-5h4z" fill="#fff" stroke="#000" strokeWidth="1.500" />
                          </Cursor>
                        </>
                      )}
                    </Td>
                  );
                })}
                <Cell />
              </tr>
            ))}
          </tbody>
        </Table>
        <VScroll>
          <VGrip />
          <Icon name="up" />
          <VTrack><VThumb /></VTrack>
          <Icon name="down" />
        </VScroll>
      </SheetArea>

      <TabBar>
        <TabNav>
          {['first', 'prev', 'next', 'last'].map(n => <button key={n} aria-label={n}><Icon name={n} color="#9b9da0" /></button>)}
        </TabNav>
        {sheets.map(s => (
          <SheetTab key={s.name} $tone={s.tone} $active={s.active} $minWidth={s.minWidth}>{s.name}</SheetTab>
        ))}
        <PlainButton aria-label="新建工作表"><Icon name="plus" size={14} /></PlainButton>
        <HScroll>
          <HGrip />
          <Icon name="backward" />
          <HThumb />
        </HScroll>
      </TabBar>

      <StatusBar>
        <BookButton>
          <svg width="18" height="18" viewBox="0 0 18 18" fill="none" stroke="#3b4058" strokeWidth="1.200">
            <path d="M9 16.500A7.500 7.500 0 1 1 16.300 9" />
            <circle cx="9" cy="8.500" r="2.800" /><circle cx="12.500" cy="11" r="2" fill="#e6eaec" /><path d="M8.500 17q.5-3.500 4-3.500t4.500 3.500z" fill="#e6eaec" />
          </svg>
          财务报表管理
        </BookButton>
        <svg width="16" height="16" viewBox="0 0 16 16"><path d="M12 6.500l3.500 3.500h-7z" fill="#6f7a9a" /></svg>
        <StatusDivider $before={12} $after={12} />
        <Icon name="script" />
        <StatusRight>
          <Views>
            <PlainButton aria-label="护眼模式"><Icon name="eye" /></PlainButton>
            <Split name="focus" label="阅读模式" />
          </Views>
          <StatusDivider $before={12} $after={8} />
          <Views>
            <ViewButton $on aria-label="普通视图"><Icon name="normalView" /></ViewButton>
            <ViewButton aria-label="页面布局"><Icon name="pageView" /></ViewButton>
            <ViewButton aria-label="分页预览"><Icon name="breakView" /></ViewButton>
          </Views>
          <StatusDivider $before={8} $after={19} />
          <ZoomSelect $w={46}>
            <Select aria-label="缩放比例" $pad={0}><option>90%</option></Select>
            <Icon name="chevron" />
          </ZoomSelect>
          <button aria-label="缩小"><Icon name="minus" /></button>
          <Slider type="range" aria-label="缩放" value={zoom} onChange={e => setZoom(Number(e.target.value))} />
          <button aria-label="放大"><Icon name="plus" /></button>
          <PlainButton $w={48} aria-label="全屏"><Icon name="expand" /></PlainButton>
        </StatusRight>
      </StatusBar>
      <Taskbar />

      <ImeBar>
        <ImeLogo width="34" height="32" viewBox="0 0 34 32">
          <path d="M4 5L26 1q2 0 2.500 2L32 24q0 3-2 3.500L9 31.500q-3 .5-3.500-2L1.500 8Q1.300 5.500 4 5z" fill="#f4561d" />
          <path d="M25 8C19 4.500 8 8 9.500 12.500c1.200 3.700 13 1.500 13.800 5.500.8 4.500-9 7.500-15.300 4.500" fill="none" stroke="#fff" strokeWidth="4.200" />
        </ImeLogo>
        <ImeMode>英</ImeMode>
        <svg width="16" height="16" viewBox="0 0 16 16" fill="#0a6fd8"><circle cx="5" cy="4.500" r="2" /><path d="M11 6.500h3v3q-.5 2.500-2.500 3v-3H11z" /></svg>
        <svg width="16" height="16" viewBox="0 0 16 16" fill="none" stroke="#0a6fd8" strokeWidth="1.800"><rect x="5.500" y="1" width="5" height="9" rx="2.500" fill="#0a6fd8" stroke="none" /><path d="M2.500 6.500c0 8 11 8 11 0M8 12.500V16" /></svg>
        <svg width="16" height="16" viewBox="0 0 16 16" fill="none" stroke="#0a6fd8" strokeWidth="1.700"><rect x="1" y="2.500" width="14" height="11" rx="1" /><path d="M3.500 5.500h9M3.500 8.500h9" strokeDasharray="2 1.500" /><path d="M4.500 11.500h7" /></svg>
        <svg width="16" height="16" viewBox="0 0 16 16" fill="#0a6fd8"><path d="M5 1.500q3 2 6 0l5 3-2 3.500-1.500-1v7.500h-9V7L2 8 0 4.500z" /></svg>
        <svg width="18" height="16" viewBox="0 0 18 16"><ellipse cx="9" cy="8.500" rx="8" ry="5" fill="#0a6fd8" /><path d="M5 3.500q4-3 8 0v10q-4 1.500-8 0z" fill="#0a6fd8" /><circle cx="6.500" cy="8.500" r="1.500" fill="#fff" /><circle cx="11.500" cy="8.500" r="1.500" fill="#fff" /></svg>
        <svg width="14" height="14" viewBox="0 0 14 14" fill="#0a6fd8"><rect width="6" height="6" rx="1.500" /><rect x="7.500" width="6" height="6" rx="3" /><rect y="7.500" width="6" height="6" rx="1.500" /><rect x="7.500" y="7.500" width="6" height="6" rx="1.500" /></svg>
      </ImeBar>

      <Watermark>
        <svg width="42" height="42" viewBox="0 0 42 42">
          <path d="M41 1C20-1 0 12 1 26c.5 4 3 8 7 8C1 20 15 7 41 1z" fill="#54a8e0" opacity=".8" />
          <path d="M18 18C24 8 42 12 41 23c-1 10-14 16-27 18 10-4 19-10 20-17 1-8-8-10-16-6z" fill="#62bf6c" opacity=".85" />
          <path d="M14 20c-3 7 3 10 12 8-6 5-17 4-16-3 0-2 2-4 4-5z" fill="#4593d6" opacity=".8" />
          <path d="M8 36c6 2 16-1 21-7-2 7-11 12-18 11z" fill="#d5cf62" opacity=".8" />
        </svg>
        <MarkText><b>极光下载站</b><i>www.xz7.com</i></MarkText>
      </Watermark>
    </Window>
  );
}
